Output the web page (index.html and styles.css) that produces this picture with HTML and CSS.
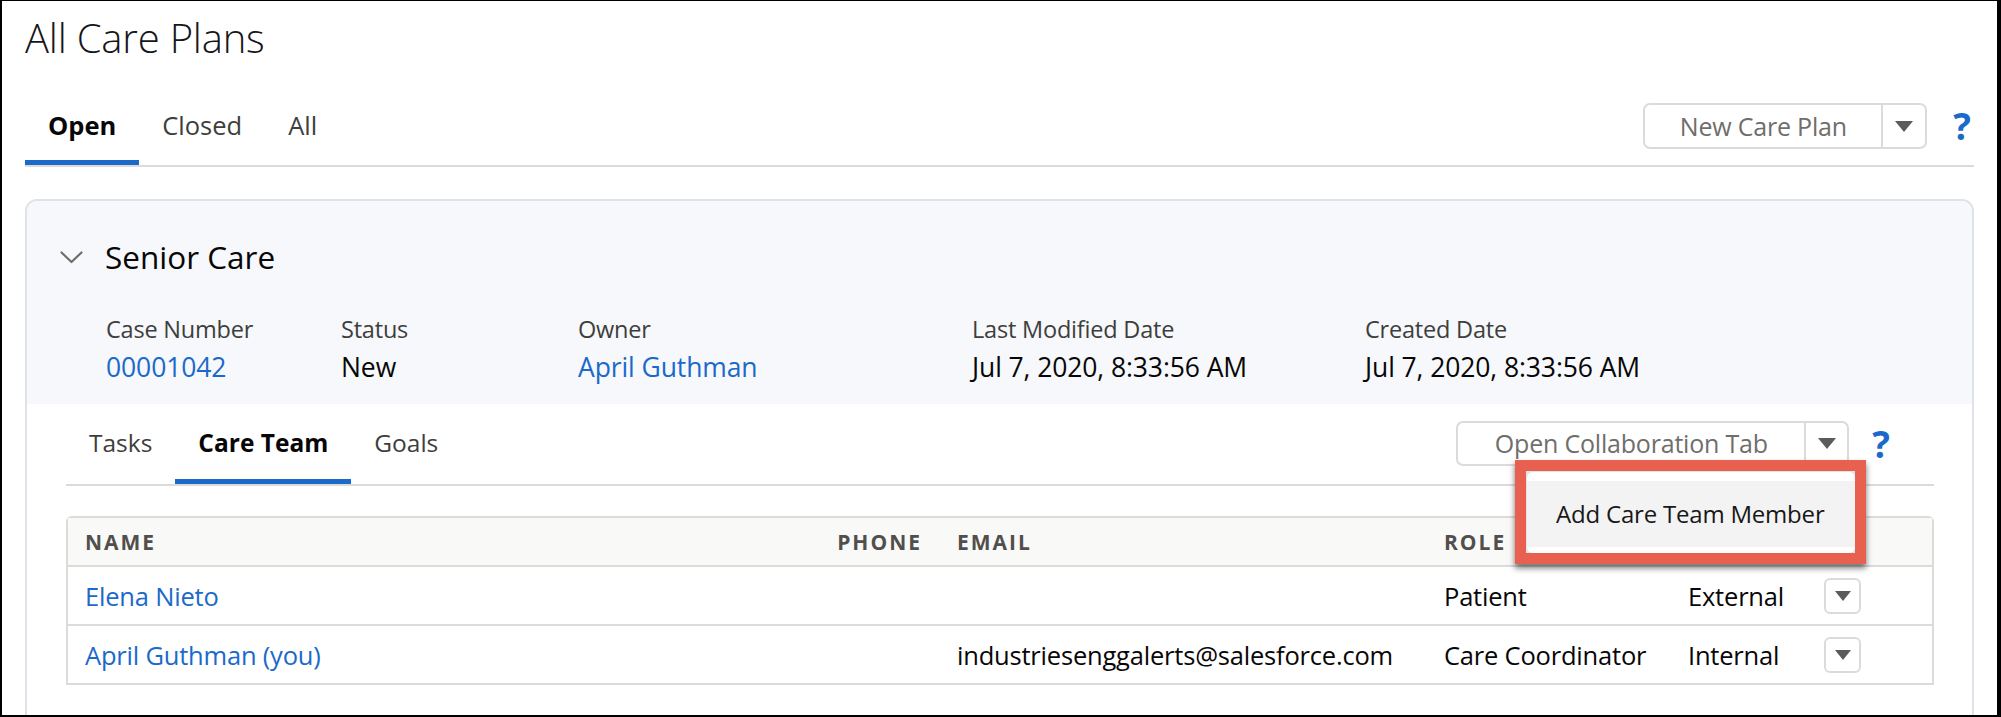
FILE: index.html
```html
<!DOCTYPE html>
<html lang="en">
<head>
    <meta charset="UTF-8">
    <title>All Care Plans</title>
    <link rel="stylesheet" href="styles.css">
</head>
<body>
    <div class="frame">
        <h1 class="page-title">All Care Plans</h1>

        <nav class="tabs">
            <a class="tab tab-active">Open</a>
            <a class="tab">Closed</a>
            <a class="tab">All</a>
            <div class="tabs-actions">
                <div class="split-btn split-new">
                    <span class="split-label">New Care Plan</span>
                    <span class="split-caret"><i class="caret"></i></span>
                </div>
                <span class="help">?</span>
            </div>
        </nav>

        <section class="card">
            <div class="card-head">
                <div class="card-title">
                    <svg class="chevron" width="23" height="13" viewBox="0 0 23 13">
                        <path d="M1.5 1.5 L11.5 11 L21.5 1.5" fill="none" stroke="#706e6b" stroke-width="2.2" stroke-linecap="round" stroke-linejoin="round"/>
                    </svg>
                    <h2>Senior Care</h2>
                </div>
                <div class="fields">
                    <div class="field">
                        <p class="field-label">Case Number</p>
                        <p class="field-value link">00001042</p>
                    </div>
                    <div class="field">
                        <p class="field-label">Status</p>
                        <p class="field-value">New</p>
                    </div>
                    <div class="field">
                        <p class="field-label">Owner</p>
                        <p class="field-value link">April Guthman</p>
                    </div>
                    <div class="field">
                        <p class="field-label">Last Modified Date</p>
                        <p class="field-value">Jul 7, 2020, 8:33:56 AM</p>
                    </div>
                    <div class="field">
                        <p class="field-label">Created Date</p>
                        <p class="field-value">Jul 7, 2020, 8:33:56 AM</p>
                    </div>
                </div>
            </div>

            <div class="card-body">
                <nav class="subtabs">
                    <a class="subtab">Tasks</a>
                    <a class="subtab subtab-active">Care Team</a>
                    <a class="subtab">Goals</a>
                    <div class="subtabs-actions">
                        <div class="split-btn split-collab">
                            <span class="split-label">Open Collaboration Tab</span>
                            <span class="split-caret"><i class="caret"></i></span>
                        </div>
                        <span class="help">?</span>
                    </div>
                </nav>

                <div class="team-table">
                    <div class="row row-head">
                        <div class="cell">Name</div>
                        <div class="cell cell-right">Phone</div>
                        <div class="cell">Email</div>
                        <div class="cell">Role</div>
                        <div class="cell">Type</div>
                        <div class="cell"></div>
                    </div>
                    <div class="row">
                        <div class="cell link">Elena Nieto</div>
                        <div class="cell"></div>
                        <div class="cell"></div>
                        <div class="cell">Patient</div>
                        <div class="cell">External</div>
                        <div class="cell"><span class="row-btn"><i class="caret caret-small"></i></span></div>
                    </div>
                    <div class="row">
                        <div class="cell link">April Guthman (you)</div>
                        <div class="cell"></div>
                        <div class="cell">industriesenggalerts@salesforce.com</div>
                        <div class="cell">Care Coordinator</div>
                        <div class="cell">Internal</div>
                        <div class="cell"><span class="row-btn"><i class="caret caret-small"></i></span></div>
                    </div>
                </div>

                <div class="menu-callout">
                    <div class="menu">
                        <div class="menu-item">Add Care Team Member</div>
                    </div>
                </div>
            </div>
        </section>
    </div>
</body>
</html>
```

FILE: styles.css
```css
* {
    margin: 0;
    padding: 0;
    box-sizing: border-box;
}
body {
    font-family: "Open Sans", "Noto Sans", sans-serif;
    color: #080707;
    background-color: #fff;
}
a {
    text-decoration: none;
    cursor: pointer;
}
.link {
    color: #1b6ac9;
}
.frame {
    width: 2001px;
    height: 717px;
    overflow: hidden;
    border: 2px solid #000;
    border-right-width: 4px;
    border-top-width: 1px;
    background-color: #fff;
}
.page-title {
    margin: 12px 0 0 23px;
    font-size: 40px;
    font-weight: 300;
    line-height: 50px;
    color: #16161a;
    letter-spacing: -0.2px;
}

/* top tabs */
.tabs {
    display: flex;
    align-items: flex-start;
    margin: 38px 23px 0;
    border-bottom: 2px solid #dddbda;
}
.tab {
    padding: 0 23px;
    height: 64px;
    line-height: 48px;
    font-size: 25.5px;
    color: #3e3e3c;
    border-bottom: 5px solid transparent;
}
.tab-active {
    font-weight: 700;
    color: #080707;
    border-bottom-color: #1b6ac9;
}
.tabs-actions {
    margin-left: auto;
    margin-top: 2px;
    margin-right: 3px;
    display: flex;
    align-items: center;
}
.split-btn {
    display: flex;
    border: 2px solid #dddbda;
    border-radius: 7px;
    background-color: #fff;
    color: #706e6b;
}
.split-label {
    text-align: center;
    font-size: 25px;
    letter-spacing: -0.2px;
}
.split-caret {
    display: flex;
    align-items: center;
    justify-content: center;
    border-left: 2px solid #dddbda;
}
.split-new {
    height: 46px;
}
.split-new .split-label {
    width: 236px;
    line-height: 42px;
}
.split-new .split-caret {
    width: 44px;
}
.caret {
    display: block;
    width: 0;
    height: 0;
    border-left: 9px solid transparent;
    border-right: 9px solid transparent;
    border-top: 11px solid #5d5b59;
}
.caret-small {
    border-left-width: 8px;
    border-right-width: 8px;
    border-top-width: 10px;
}
.help {
    margin-left: 26px;
    font-size: 37px;
    font-weight: 700;
    color: #1b6ac9;
    line-height: 40px;
}

/* card */
.card {
    margin: 32px 23px 0;
    border: 2px solid #dfe2e8;
    border-radius: 12px;
    overflow: hidden;
    padding-bottom: 60px;
}
.card-head {
    background-color: #f6f8fb;
    padding: 36px 0 22px 33px;
}
.card-title {
    display: flex;
    align-items: center;
}
.chevron {
    margin-right: 22px;
}
.card-title h2 {
    font-size: 31.5px;
    font-weight: 400;
    line-height: 40px;
    color: #080707;
}
.fields {
    display: grid;
    grid-template-columns: 235px 237px 394px 393px auto;
    margin: 37px 0 0 46px;
}
.field-label {
    font-size: 23.5px;
    line-height: 30px;
    color: #3e3e3c;
    letter-spacing: -0.2px;
}
.field-value {
    margin-top: 8px;
    font-size: 26.5px;
    line-height: 30px;
    letter-spacing: -0.1px;
}

.card-body {
    position: relative;
    padding: 0 38px 0 39px;
}
.subtabs {
    display: flex;
    align-items: flex-start;
    border-bottom: 2px solid #dddbda;
}
.subtab {
    padding: 15px 23px 12px;
    line-height: 48px;
    font-size: 24.5px;
    color: #3e3e3c;
    border-bottom: 5px solid transparent;
}
.subtab-active {
    font-weight: 700;
    color: #080707;
    border-bottom-color: #1b6ac9;
}
.subtabs-actions {
    margin-left: auto;
    margin-top: 17px;
    margin-right: 44px;
    display: flex;
    align-items: center;
}
.split-collab {
    height: 45px;
}
.split-collab .split-label {
    width: 346px;
    line-height: 41px;
}
.split-collab .split-caret {
    width: 43px;
}
.subtabs-actions .help {
    margin-left: 23px;
}

/* care team table */
.team-table {
    margin-top: 30px;
    border: 2px solid #dddbda;
    border-radius: 6px 6px 0 0;
}
.row {
    display: grid;
    grid-template-columns: 742px 130px 487px 244px 139px auto;
    align-items: center;
    height: 59px;
    border-top: 2px solid #dddbda;
    font-size: 25.5px;
    letter-spacing: -0.2px;
}
.row-head {
    height: 47px;
    border-top: none;
    background-color: #f9f9f8;
    font-size: 21px;
    font-weight: 700;
    letter-spacing: 2px;
    text-transform: uppercase;
    color: #514f4d;
}
.cell {
    padding-left: 17px;
    white-space: nowrap;
}
.cell-right {
    padding-left: 0;
    padding-right: 18px;
    text-align: right;
}
.row-btn {
    display: flex;
    align-items: center;
    justify-content: center;
    width: 37px;
    height: 36px;
    margin-left: -3px;
    border: 2px solid #dddbda;
    border-radius: 6px;
}

/* highlighted action menu */
.menu-callout {
    position: absolute;
    left: 1488px;
    top: 56px;
    width: 351px;
    height: 104px;
    border: 11px solid #e8604f;
    padding: 1px 0 0 1px;
    background-color: #e3e3e3;
    box-shadow: 0 4px 6px rgba(0, 0, 0, 0.55);
}
.menu {
    height: 100%;
    padding: 9px 0 7px;
    border-radius: 6px;
    background-color: #fff;
}
.menu-item {
    height: 66px;
    line-height: 66px;
    padding-left: 29px;
    font-size: 24px;
    color: #181818;
    background-color: #f3f3f3;
    letter-spacing: -0.2px;
}
```
